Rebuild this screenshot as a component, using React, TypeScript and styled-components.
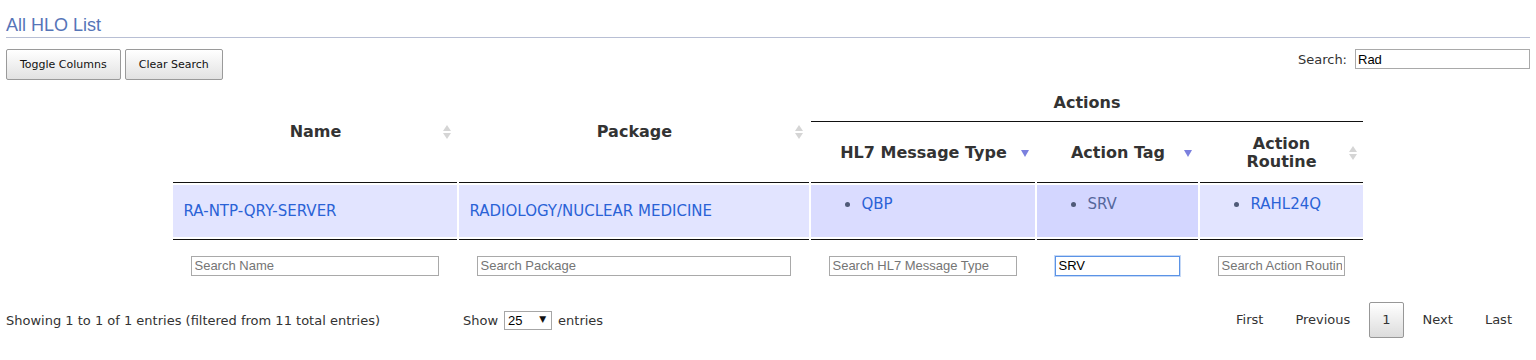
import styled, { createGlobalStyle } from 'styled-components';

const GlobalStyle = createGlobalStyle`
  * {
    box-sizing: border-box;
  }
  body {
    margin: 0;
    background: #fff;
    font-family: "DejaVu Sans", Verdana, sans-serif;
    color: #333;
  }
`;

const Page = styled.div`
  padding: 16px 6px 0;
`;

const Title = styled.h2`
  margin: 0;
  padding-bottom: 2px;
  font-family: "Liberation Sans", Arial, sans-serif;
  font-weight: 400;
  font-size: 18px;
  line-height: 19px;
  color: #5675b8;
  border-bottom: 1px solid #b8bfd4;
`;

const Toolbar = styled.div`
  display: flex;
  justify-content: space-between;
  align-items: flex-start;
  margin-top: 11px;
`;

const ButtonGroup = styled.div`
  display: flex;
  gap: 4px;
`;

const Button = styled.button`
  height: 31px;
  padding: 0 13px;
  font-family: "DejaVu Sans", Verdana, sans-serif;
  font-size: 11px;
  color: #111;
  border: 1px solid #9a9a9a;
  border-radius: 2px;
  background: linear-gradient(to bottom, #ffffff 0%, #e2e2e2 100%);
`;

const SearchBox = styled.label`
  display: flex;
  align-items: center;
  gap: 8px;
  font-size: 13px;
  color: #333;
`;

const TextInput = styled.input<{ $focused?: boolean; $fill?: boolean }>`
  width: ${(p) => (p.$fill ? '100%' : '175px')};
  height: 20px;
  padding: 1px 2px;
  font-family: "Liberation Sans", Arial, sans-serif;
  font-size: 13px;
  color: #000;
  border: 1px solid ${(p) => (p.$focused ? '#5b93e6' : '#a9a9a9')};
  box-shadow: ${(p) => (p.$focused ? '0 0 0 1px rgba(91, 147, 230, 0.35)' : 'none')};
  outline: none;
  background: #fff;

  &::placeholder {
    color: #757575;
  }
`;

const Table = styled.table`
  table-layout: fixed;
  border-collapse: separate;
  border-spacing: 2px;
  width: 1193px;
  margin: 6px auto 0;
`;

const HeadCell = styled.th<{ $height: number; $shift?: number }>`
  height: ${(p) => p.$height}px;
  padding: 0 6px ${(p) => p.$shift ?? 0}px 18px;
  font-size: 16px;
  font-weight: 700;
  line-height: 18px;
  color: #333;
  text-align: center;
  vertical-align: middle;
  border-bottom: 1px solid #111;
`;

const GroupCell = styled(HeadCell)`
  padding: 0 10px 4px;
`;

const HeadInner = styled.div`
  display: flex;
  align-items: center;
  gap: 4px;
`;

const HeadLabel = styled.span`
  flex: 1;
  text-align: center;
`;

const IconSlot = styled.span`
  display: flex;
  width: 8px;
  flex: none;
`;

const BodyCell = styled.td<{ $bg: string }>`
  height: 52px;
  padding: 3px 10px;
  vertical-align: middle;
  background: ${(p) => p.$bg};
  font-size: 15px;
`;

const Link = styled.a<{ $muted?: boolean }>`
  color: ${(p) => (p.$muted ? '#55679c' : '#2a62d6')};
  text-decoration: none;
`;

const List = styled.ul`
  margin: 0 0 15px;
  padding-left: 40px;
  color: #4f5a78;
`;

const FootCell = styled.th`
  height: 56px;
  padding: 0 18px 4px;
  border-top: 1px solid #111;
  vertical-align: middle;
  font-weight: 400;
`;

const Footer = styled.div`
  display: flex;
  align-items: center;
  height: 36px;
  margin-top: 5px;
  font-size: 13px;
  color: #333;
`;

const Info = styled.div`
  width: 457px;
`;

const Length = styled.div`
  display: flex;
  align-items: center;
  gap: 6px;
`;

const SelectWrap = styled.span`
  position: relative;
  display: inline-flex;
`;

const Select = styled.select`
  appearance: none;
  width: 48px;
  height: 19px;
  padding: 0 0 0 3px;
  font-family: "Liberation Sans", Arial, sans-serif;
  font-size: 13px;
  color: #000;
  border: 1px solid #a6a6a6;
  border-radius: 0;
  background: #fff;
`;

const SelectArrow = styled.span`
  position: absolute;
  right: 6px;
  top: 3px;
  font-size: 9px;
  color: #111;
  pointer-events: none;
`;

const Paging = styled.div`
  display: flex;
  align-items: center;
  margin-left: auto;
  margin-right: 5px;
`;

const PageButton = styled.a<{ $current?: boolean }>`
  display: inline-block;
  margin-left: 6px;
  padding: 7px 12px;
  line-height: 20px;
  color: #333;
  border: 1px solid ${(p) => (p.$current ? '#979797' : 'transparent')};
  border-radius: 2px;
  background: ${(p) =>
    p.$current ? 'linear-gradient(to bottom, #ffffff 0%, #dcdcdc 100%)' : 'transparent'};
  cursor: pointer;
`;

const SortBoth = () => (
  <svg width="8" height="14" viewBox="0 0 8 14">
    <path d="M4 0 L8 6 H0 Z" fill="#d5d5d5" />
    <path d="M0 8 H8 L4 14 Z" fill="#d5d5d5" />
  </svg>
);

const SortDesc = () => (
  <svg width="8" height="8" viewBox="0 0 8 8">
    <path d="M0 1 H8 L4 8 Z" fill="#7b80de" />
  </svg>
);

const ODD = '#e2e4ff';
const SORT_1 = '#d3d6ff';
const SORT_2 = '#dadcff';

export default function App() {
  return (
    <Page>
      <GlobalStyle />
      <Title>All HLO List</Title>
      <Toolbar>
        <ButtonGroup>
          <Button>Toggle Columns</Button>
          <Button>Clear Search</Button>
        </ButtonGroup>
        <SearchBox>
          Search:
          <TextInput defaultValue="Rad" />
        </SearchBox>
      </Toolbar>

      <Table>
        <colgroup>
          <col style={{ width: 284 }} />
          <col style={{ width: 350 }} />
          <col style={{ width: 224 }} />
          <col style={{ width: 161 }} />
          <col style={{ width: 162 }} />
        </colgroup>
        <thead>
          <tr>
            <HeadCell rowSpan={2} $height={34} $shift={6}>
              <HeadInner>
                <HeadLabel>Name</HeadLabel>
                <IconSlot><SortBoth /></IconSlot>
              </HeadInner>
            </HeadCell>
            <HeadCell rowSpan={2} $height={34} $shift={6}>
              <HeadInner>
                <HeadLabel>Package</HeadLabel>
                <IconSlot><SortBoth /></IconSlot>
              </HeadInner>
            </HeadCell>
            <GroupCell colSpan={3} $height={34}>Actions</GroupCell>
          </tr>
          <tr>
            <HeadCell $height={59}>
              <HeadInner>
                <HeadLabel>HL7 Message Type</HeadLabel>
                <IconSlot><SortDesc /></IconSlot>
              </HeadInner>
            </HeadCell>
            <HeadCell $height={59}>
              <HeadInner>
                <HeadLabel>Action Tag</HeadLabel>
                <IconSlot><SortDesc /></IconSlot>
              </HeadInner>
            </HeadCell>
            <HeadCell $height={59}>
              <HeadInner>
                <HeadLabel>Action Routine</HeadLabel>
                <IconSlot><SortBoth /></IconSlot>
              </HeadInner>
            </HeadCell>
          </tr>
        </thead>
        <tbody>
          <tr>
            <BodyCell $bg={ODD}>
              <Link>RA-NTP-QRY-SERVER</Link>
            </BodyCell>
            <BodyCell $bg={ODD}>
              <Link>RADIOLOGY/NUCLEAR MEDICINE</Link>
            </BodyCell>
            <BodyCell $bg={SORT_2}>
              <List>
                <li><Link>QBP</Link></li>
              </List>
            </BodyCell>
            <BodyCell $bg={SORT_1}>
              <List>
                <li><Link $muted>SRV</Link></li>
              </List>
            </BodyCell>
            <BodyCell $bg={ODD}>
              <List>
                <li><Link>RAHL24Q</Link></li>
              </List>
            </BodyCell>
          </tr>
        </tbody>
        <tfoot>
          <tr>
            <FootCell><TextInput $fill placeholder="Search Name" /></FootCell>
            <FootCell><TextInput $fill placeholder="Search Package" /></FootCell>
            <FootCell><TextInput $fill placeholder="Search HL7 Message Type" /></FootCell>
            <FootCell><TextInput $fill $focused defaultValue="SRV" /></FootCell>
            <FootCell><TextInput $fill placeholder="Search Action Routine" /></FootCell>
          </tr>
        </tfoot>
      </Table>

      <Footer>
        <Info>Showing 1 to 1 of 1 entries (filtered from 11 total entries)</Info>
        <Length>
          Show
          <SelectWrap>
            <Select defaultValue="25">
              <option value="10">10</option>
              <option value="25">25</option>
              <option value="50">50</option>
              <option value="100">100</option>
            </Select>
            <SelectArrow>▼</SelectArrow>
          </SelectWrap>
          entries
        </Length>
        <Paging>
          <PageButton>First</PageButton>
          <PageButton>Previous</PageButton>
          <PageButton $current>1</PageButton>
          <PageButton>Next</PageButton>
          <PageButton>Last</PageButton>
        </Paging>
      </Footer>
    </Page>
  );
}
